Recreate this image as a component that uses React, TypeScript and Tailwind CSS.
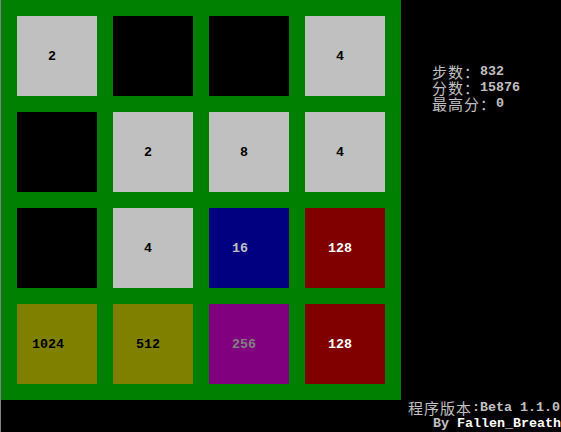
import React from "react";

type Tile = { v: number | null };

const rows: (number | null)[][] = [
  [2, null, null, 4],
  [null, 2, 8, 4],
  [null, 4, 16, 128],
  [1024, 512, 256, 128],
];

const tileStyle: Record<string, string> = {
  empty: "bg-[#000000]",
  "2": "bg-[#c0c0c0] text-[#000000]",
  "4": "bg-[#c0c0c0] text-[#000000]",
  "8": "bg-[#c0c0c0] text-[#000000]",
  "16": "bg-[#000080] text-[#c0c0c0]",
  "128": "bg-[#800000] text-[#ffffff]",
  "256": "bg-[#800080] text-[#808080]",
  "512": "bg-[#808000] text-[#000000]",
  "1024": "bg-[#808000] text-[#000000]",
};

const padByLen: Record<number, string> = {
  1: "pl-[31px]",
  2: "pl-[23px]",
  3: "pl-[23px]",
  4: "pl-[15px]",
};

const mono = "font-['Liberation_Mono',monospace] text-[13.333px] leading-[16px] font-bold";
const cjk = "font-['Noto_Sans_CJK_SC',sans-serif] text-[15px] leading-[16px] tracking-[1px] font-normal";

function Cell({ v }: Tile) {
  if (v === null) return <div className={`w-[80px] h-[80px] ${tileStyle.empty}`} />;
  const s = String(v);
  return (
    <div
      className={`w-[80px] h-[80px] flex items-center ${tileStyle[s]} ${padByLen[s.length]} ${mono}`}
    >
      <span className="pt-[1px]">{s}</span>
    </div>
  );
}

function Line({ children, className = "" }: { children: React.ReactNode; className?: string }) {
  return (
    <div className={`h-[16px] flex items-center whitespace-nowrap overflow-visible ${className}`}>
      {children}
    </div>
  );
}

export default function App() {
  return (
    <div className="w-[561px] h-[432px] bg-black flex overflow-hidden">
      <div className="w-[1px] h-full bg-[#808080]" />
      <div className="w-[400px] flex flex-col">
        <div className="w-[400px] h-[400px] bg-[#008000] p-4 grid grid-cols-4 gap-4">
          {rows.flat().map((v, i) => (
            <Cell key={i} v={v} />
          ))}
        </div>
      </div>
      <div className="flex-1 flex flex-col text-[#c0c0c0]">
        <div className="pt-[64px] pl-[31px] flex flex-col">
          <Line>
            <span className={cjk}>步数：</span>
            <span className={mono}>832</span>
          </Line>
          <Line>
            <span className={cjk}>分数：</span>
            <span className={mono}>15876</span>
          </Line>
          <Line>
            <span className={cjk}>最高分：</span>
            <span className={mono}>0</span>
          </Line>
        </div>
        <div className="mt-auto flex flex-col items-end">
          <Line className="pr-[1px]">
            <span className={cjk}>程序版本</span>
            <span className={mono}>:Beta 1.1.0</span>
          </Line>
          <Line>
            <span className={mono}>By&nbsp;</span>
            <span className={`${mono} text-white`}>Fallen_Breath</span>
          </Line>
        </div>
      </div>
    </div>
  );
}
